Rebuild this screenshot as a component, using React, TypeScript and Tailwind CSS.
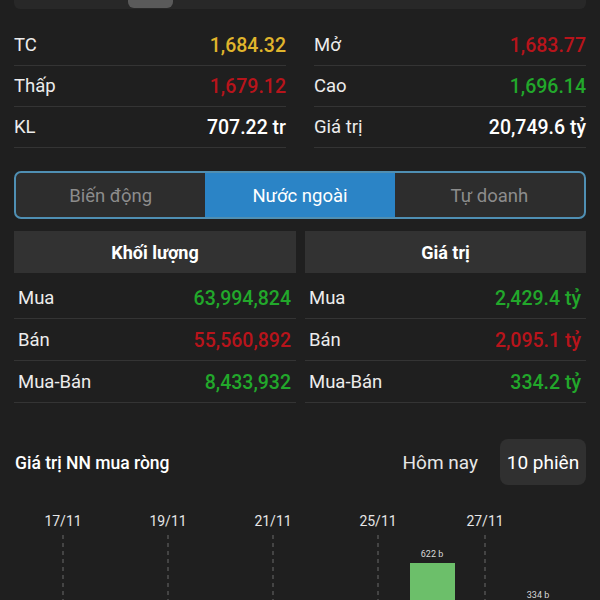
import React from 'react';

type Stat = { label: string; value: string; color: string };

const statsLeft: Stat[] = [
  { label: 'TC', value: '1,684.32', color: 'text-[#e0b52c]' },
  { label: 'Thấp', value: '1,679.12', color: 'text-[#b8141b]' },
  { label: 'KL', value: '707.22 tr', color: 'text-white' },
];

const statsRight: Stat[] = [
  { label: 'Mở', value: '1,683.77', color: 'text-[#b8141b]' },
  { label: 'Cao', value: '1,696.14', color: 'text-[#22a82b]' },
  { label: 'Giá trị', value: '20,749.6 tỷ', color: 'text-white' },
];

const volRows: Stat[] = [
  { label: 'Mua', value: '63,994,824', color: 'text-[#22a82b]' },
  { label: 'Bán', value: '55,560,892', color: 'text-[#b8141b]' },
  { label: 'Mua-Bán', value: '8,433,932', color: 'text-[#22a82b]' },
];

const valRows: Stat[] = [
  { label: 'Mua', value: '2,429.4 tỷ', color: 'text-[#22a82b]' },
  { label: 'Bán', value: '2,095.1 tỷ', color: 'text-[#b8141b]' },
  { label: 'Mua-Bán', value: '334.2 tỷ', color: 'text-[#22a82b]' },
];

const StatCol = ({ rows }: { rows: Stat[] }) => (
  <div className="flex flex-col">
    {rows.map((r) => (
      <div
        key={r.label}
        className="flex h-[41px] items-center justify-between border-b border-[#343434] pt-[2px]"
      >
        <span className="text-[18.5px] text-[#ececec]">{r.label}</span>
        <span className={`text-[19.5px] font-medium ${r.color}`}>{r.value}</span>
      </div>
    ))}
  </div>
);

const Table = ({ title, rows }: { title: string; rows: Stat[] }) => (
  <div className="flex flex-col">
    <div className="flex h-[42px] items-center justify-center bg-[#323232] pt-[1px] text-[18px] font-bold text-white">
      {title}
    </div>
    <div className="mt-[4px] flex flex-col">
      {rows.map((r) => (
        <div
          key={r.label}
          className="flex h-[42px] items-center justify-between border-b border-[#343434] pl-[4px] pr-[5px] pt-[2px]"
        >
          <span className="text-[18.5px] text-[#ececec]">{r.label}</span>
          <span className={`text-[19.5px] font-medium ${r.color}`}>{r.value}</span>
        </div>
      ))}
    </div>
  </div>
);

const dates = [
  { x: 63, t: '17/11' },
  { x: 168, t: '19/11' },
  { x: 273, t: '21/11' },
  { x: 378, t: '25/11' },
  { x: 485, t: '27/11' },
];

const Chart = () => (
  <svg width="600" height="100" viewBox="0 0 600 100" className="block">
    {dates.map((d) => (
      <g key={d.t}>
        <text
          x={d.x}
          y={26}
          textAnchor="middle"
          fill="#e6e6e6"
          fontSize="14"
          fontFamily="Roboto, sans-serif"
        >
          {d.t}
        </text>
        <line
          x1={d.x}
          y1={35}
          x2={d.x}
          y2={100}
          stroke="#6a6a6a"
          strokeWidth="1"
          strokeDasharray="4 4"
        />
      </g>
    ))}
    <rect x="410" y="63" width="45" height="37" fill="#6cbf6a" />
    <text x="432" y="57" textAnchor="middle" fill="#d8d8d8" fontSize="9" fontFamily="Roboto, sans-serif">
      622 b
    </text>
    <text x="538" y="98" textAnchor="middle" fill="#d8d8d8" fontSize="9" fontFamily="Roboto, sans-serif">
      334 b
    </text>
  </svg>
);

export default function App() {
  return (
    <div className="h-[600px] w-[600px] overflow-hidden bg-[#1f1f1f] font-['Roboto',sans-serif]">
      {/* cut-off segmented control */}
      <div className="mx-[14px] flex h-[9px] rounded-b-[6px] bg-[#282828]">
        <div className="ml-[114px] h-[8px] w-[45px] rounded-b-[6px] bg-[#5a5a5a]" />
      </div>

      {/* index stats */}
      <div className="mx-[14px] mt-[16px] grid grid-cols-2 gap-x-[28px]">
        <StatCol rows={statsLeft} />
        <StatCol rows={statsRight} />
      </div>

      {/* tabs */}
      <div className="mx-[14px] mt-[23px] flex h-[48px] overflow-hidden rounded-[7px] border-2 border-[#4f8fb3] bg-[#2d2d2d]">
        <div className="flex flex-1 items-center justify-center pt-[3px] text-[18.5px] text-[#8c8c8c]">Biến động</div>
        <div className="flex flex-1 items-center justify-center bg-[#2b84c6] pt-[3px] text-[18.5px] text-white">Nước ngoài</div>
        <div className="flex flex-1 items-center justify-center pt-[3px] text-[18.5px] text-[#8c8c8c]">Tự doanh</div>
      </div>

      {/* foreign trading tables */}
      <div className="mx-[14px] mt-[12px] grid grid-cols-[282px_1fr] gap-x-[9px]">
        <Table title="Khối lượng" rows={volRows} />
        <Table title="Giá trị" rows={valRows} />
      </div>

      {/* net buy chart */}
      <div className="mt-[36px] flex items-center justify-between pl-[15px] pr-[14px]">
        <span className="pt-[2px] text-[17.5px] font-medium text-white">Giá trị NN mua ròng</span>
        <div className="flex items-center gap-[22px]">
          <span className="pt-[2px] text-[19px] text-[#e6e6e6]">Hôm nay</span>
          <div className="flex h-[46px] w-[86px] items-center justify-center rounded-[8px] bg-[#303030] pt-[2px] text-[19px] text-white">
            10 phiên
          </div>
        </div>
      </div>
      <div className="mt-[15px]">
        <Chart />
      </div>
    </div>
  );
}
